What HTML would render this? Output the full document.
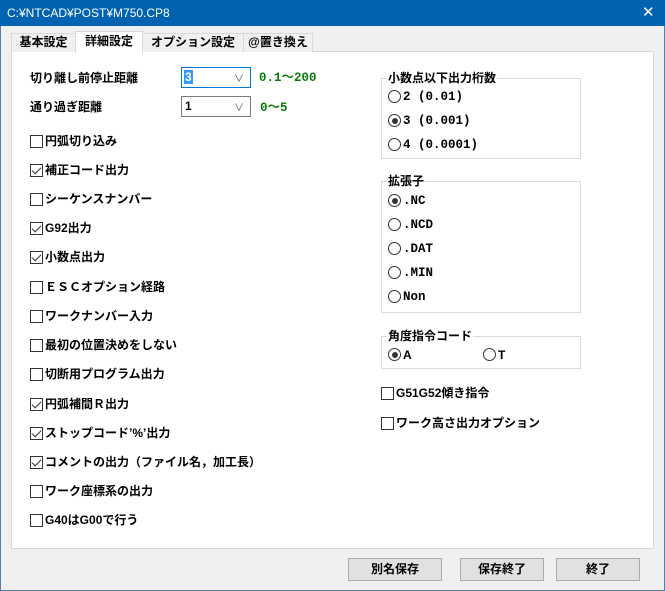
<!DOCTYPE html>
<html><head><meta charset="utf-8"><style>
*{margin:0;padding:0;box-sizing:border-box}
body{width:665px;height:591px;overflow:hidden;background:#f0f0f0;font-family:"Liberation Sans","Noto Sans CJK JP",sans-serif;font-size:12px;font-weight:bold;color:#000;position:relative}
.a{position:absolute;white-space:nowrap;line-height:14px}
.m{font-family:"Liberation Mono","Noto Sans CJK JP",monospace;font-size:12.5px}
.win{position:absolute;left:0;top:0;width:665px;height:591px;border:1px solid #5a7ea8;border-top:none}
.title{position:absolute;left:0;top:0;width:665px;height:26px;background:#0063b1;color:#fff;font-weight:normal;font-size:12px;line-height:26px;padding-left:7px}
.panel{position:absolute;left:11px;top:51px;width:643px;height:498px;background:#fff;border:1px solid #d9d9d9}
.tab{position:absolute;top:33px;height:19px;background:#f0f0f0;border:1px solid #d9d9d9;border-bottom:none;line-height:17px;text-align:center;font-size:12px}
.cb{position:absolute;width:13px;height:13px;border:1px solid #333;background:#fff}
.cb.c::after{content:"";position:absolute;left:3px;top:0px;width:4px;height:8px;border:solid #333;border-width:0 1.5px 1.5px 0;transform:rotate(45deg)}
.rb{position:absolute;width:13px;height:13px;border:1px solid #333;border-radius:50%;background:#fff}
.rb.c::after{content:"";position:absolute;left:2.5px;top:2.5px;width:6px;height:6px;border-radius:50%;background:#333}
.grp{position:absolute;border:1px solid #dcdcdc}
.lg{position:absolute;background:#fff;padding:0 1px;line-height:14px}
.combo{position:absolute;width:70px;height:21px;border:1px solid #7a7a7a;background:#fff}
.combo span{position:absolute;right:6px;top:2px;font-weight:normal;color:#555;font-size:10px}
.g{color:#0a7a0a}
.btn{position:absolute;top:558px;height:23px;background:#e1e1e1;border:1px solid #adadad;text-align:center;line-height:21px}
</style></head><body>
<div class="win"></div>
<div class="title">C:¥NTCAD¥POST¥M750.CP8</div>
<div class="a" style="left:642px;top:5px;color:#fff;font-size:15px;font-weight:normal;line-height:16px">✕</div>
<div class="panel"></div>
<div class="tab" style="left:11px;width:65px">基本設定</div>
<div class="tab" style="left:142px;width:102px">オプション設定</div>
<div class="tab" style="left:243px;width:70px">@置き換え</div>
<div class="tab" style="left:75px;width:68px;top:31px;height:22px;background:#fff;line-height:19px">詳細設定</div>

<div class="a" style="left:30px;top:71px">切り離し前停止距離</div>
<div class="combo" style="left:181px;top:67px;border-color:#0078d7"><b style="position:absolute;left:2px;top:2px;background:#3399ff;color:#fff;line-height:14px;padding:0 1px">3</b><span>∨</span></div>
<div class="a g m" style="left:259px;top:71px">0.1～200</div>
<div class="a" style="left:30px;top:100px">通り過ぎ距離</div>
<div class="combo" style="left:181px;top:96px"><b style="position:absolute;left:3px;top:2px;line-height:14px">1</b><span>∨</span></div>
<div class="a g m" style="left:260px;top:101px">0～5</div>

<div class="cb" style="left:30px;top:135px"></div><div class="a" style="left:45px;top:134px">円弧切り込み</div>
<div class="cb c" style="left:30px;top:164px"></div><div class="a" style="left:45px;top:163px">補正コード出力</div>
<div class="cb" style="left:30px;top:193px"></div><div class="a" style="left:45px;top:192px">シーケンスナンバー</div>
<div class="cb c" style="left:30px;top:222px"></div><div class="a" style="left:45px;top:221px">G92出力</div>
<div class="cb c" style="left:30px;top:251px"></div><div class="a" style="left:45px;top:250px">小数点出力</div>
<div class="cb" style="left:30px;top:281px"></div><div class="a" style="left:45px;top:280px">ＥＳＣオプション経路</div>
<div class="cb" style="left:30px;top:310px"></div><div class="a" style="left:45px;top:309px">ワークナンバー入力</div>
<div class="cb" style="left:30px;top:339px"></div><div class="a" style="left:45px;top:338px">最初の位置決めをしない</div>
<div class="cb" style="left:30px;top:368px"></div><div class="a" style="left:45px;top:367px">切断用プログラム出力</div>
<div class="cb c" style="left:30px;top:398px"></div><div class="a" style="left:45px;top:397px">円弧補間Ｒ出力</div>
<div class="cb c" style="left:30px;top:427px"></div><div class="a" style="left:45px;top:426px">ストップコード’%’出力</div>
<div class="cb c" style="left:30px;top:456px"></div><div class="a" style="left:45px;top:455px">コメントの出力（ファイル名，加工長）</div>
<div class="cb" style="left:30px;top:485px"></div><div class="a" style="left:45px;top:484px">ワーク座標系の出力</div>
<div class="cb" style="left:30px;top:514px"></div><div class="a" style="left:45px;top:513px">G40はG00で行う</div>

<div class="grp" style="left:381px;top:78px;width:200px;height:81px"></div>
<div class="lg" style="left:387px;top:71px">小数点以下出力桁数</div>
<div class="rb" style="left:388px;top:90px"></div><div class="a m" style="left:403px;top:90px">2 (0.01)</div>
<div class="rb c" style="left:388px;top:114px"></div><div class="a m" style="left:403px;top:114px">3 (0.001)</div>
<div class="rb" style="left:388px;top:138px"></div><div class="a m" style="left:403px;top:138px">4 (0.0001)</div>

<div class="grp" style="left:381px;top:181px;width:200px;height:132px"></div>
<div class="lg" style="left:387px;top:174px">拡張子</div>
<div class="rb c" style="left:388px;top:194px"></div><div class="a m" style="left:403px;top:194px">.NC</div>
<div class="rb" style="left:388px;top:218px"></div><div class="a m" style="left:403px;top:218px">.NCD</div>
<div class="rb" style="left:388px;top:242px"></div><div class="a m" style="left:403px;top:242px">.DAT</div>
<div class="rb" style="left:388px;top:266px"></div><div class="a m" style="left:403px;top:266px">.MIN</div>
<div class="rb" style="left:388px;top:290px"></div><div class="a m" style="left:403px;top:290px">Non</div>

<div class="grp" style="left:381px;top:336px;width:200px;height:33px"></div>
<div class="lg" style="left:387px;top:329px">角度指令コード</div>
<div class="rb c" style="left:388px;top:348px"></div><div class="a" style="left:403px;top:348px">A</div>
<div class="rb" style="left:483px;top:348px"></div><div class="a" style="left:498px;top:348px">T</div>

<div class="cb" style="left:381px;top:387px"></div><div class="a" style="left:396px;top:386px">G51G52傾き指令</div>
<div class="cb" style="left:381px;top:417px"></div><div class="a" style="left:396px;top:416px">ワーク高さ出力オプション</div>

<div class="btn" style="left:348px;width:94px">別名保存</div>
<div class="btn" style="left:460px;width:84px">保存終了</div>
<div class="btn" style="left:556px;width:84px">終了</div>
</body></html>
